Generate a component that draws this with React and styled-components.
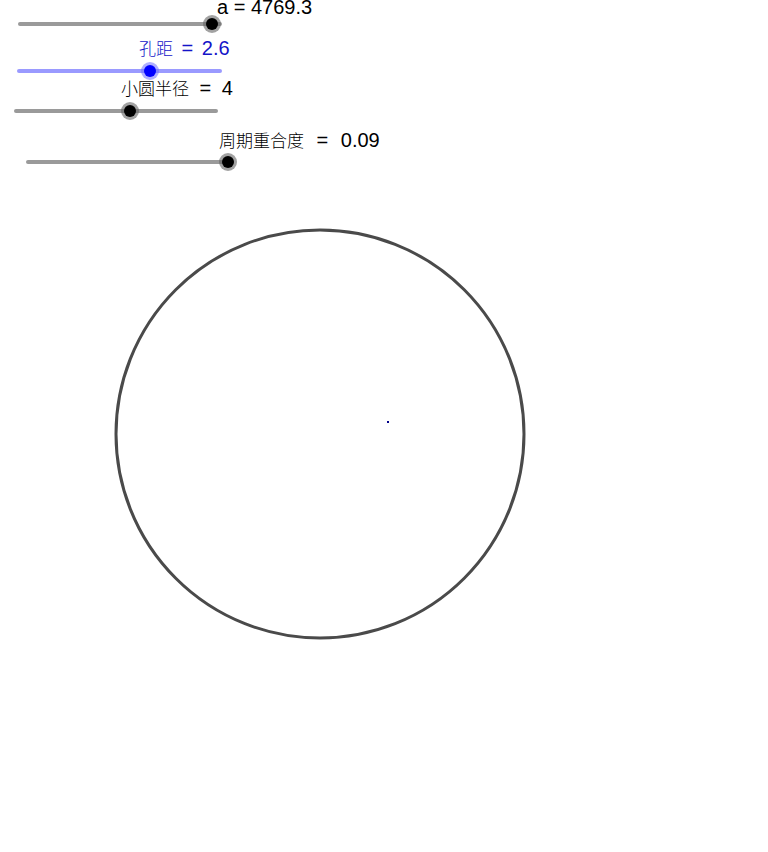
import React from "react";
import styled, { createGlobalStyle } from "styled-components";

const GlobalStyle = createGlobalStyle`
  html, body { margin: 0; padding: 0; background: #ffffff; }
  body { font-family: "Liberation Sans", Arial, sans-serif; }
`;

const Canvas = styled.div`
  position: relative;
  width: 768px;
  height: 852px;
  overflow: hidden;
  background: #ffffff;
`;

const Track = styled.div`
  position: absolute;
  left: ${(p) => p.$x}px;
  top: ${(p) => p.$y - 2}px;
  width: ${(p) => p.$w}px;
  height: 4px;
  border-radius: 2px;
  background: ${(p) => (p.$blue ? "#9a9aff" : "#9a9a9a")};
`;

const Knob = styled.div`
  position: absolute;
  left: ${(p) => p.$pos - 9}px;
  top: -7px;
  width: 18px;
  height: 18px;
  border-radius: 50%;
  background: ${(p) => (p.$blue ? "rgba(110,110,255,0.55)" : "rgba(100,100,100,0.6)")};
  display: flex;
  align-items: center;
  justify-content: center;

  &::after {
    content: "";
    width: 12px;
    height: 12px;
    border-radius: 50%;
    background: ${(p) => (p.$blue ? "#0000ff" : "#000000")};
  }
`;

const Label = styled.div`
  position: absolute;
  left: ${(p) => p.$x}px;
  top: ${(p) => p.$y}px;
  white-space: pre;
  font-family: "Liberation Sans", Arial, sans-serif;
  font-size: 20px;
  line-height: 20px;
  word-spacing: ${(p) => p.$ws}px;
  color: ${(p) => (p.$blue ? "#1414c8" : "#000000")};
`;

const Han = styled.span`
  font-family: "Noto Sans CJK SC", sans-serif;
  font-size: 17px;
  font-weight: 300;
`;

const Figure = styled.svg`
  position: absolute;
  left: 0;
  top: 0;
  width: 768px;
  height: 852px;
  pointer-events: none;
`;

const sliders = [
  { x: 18, y: 24, w: 204, knob: 194, han: "", rest: "a = 4769.3", lx: 217, ly: -3, ws: 0, blue: false },
  { x: 17, y: 71, w: 205, knob: 133, han: "孔距", rest: " = 2.6", lx: 139, ly: 38, ws: 3, blue: true },
  { x: 14, y: 111, w: 204, knob: 116, han: "小圆半径", rest: " = 4", lx: 121, ly: 78, ws: 5, blue: false },
  { x: 26, y: 162, w: 203, knob: 202, han: "周期重合度", rest: " = 0.09", lx: 219, ly: 130, ws: 7, blue: false },
];

export default function App() {
  return (
    <>
      <GlobalStyle />
      <Canvas>
        <Figure viewBox="0 0 768 852">
          <circle cx="320" cy="434" r="204" fill="none" stroke="#4a4a4a" strokeWidth="3" />
          <rect x="387" y="421" width="2" height="2" fill="#00008a" />
        </Figure>
        {sliders.map((s, i) => (
          <React.Fragment key={i}>
            <Track $x={s.x} $y={s.y} $w={s.w} $blue={s.blue}>
              <Knob $pos={s.knob} $blue={s.blue} />
            </Track>
            <Label $x={s.lx} $y={s.ly} $ws={s.ws} $blue={s.blue}>
              {s.han && <Han>{s.han}</Han>}
              {s.rest}
            </Label>
          </React.Fragment>
        ))}
      </Canvas>
    </>
  );
}
